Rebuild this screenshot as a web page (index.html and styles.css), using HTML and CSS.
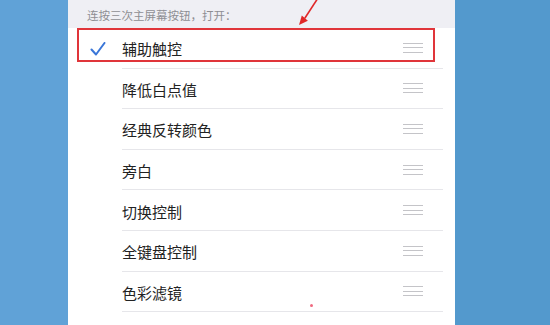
FILE: index.html
```html
<!DOCTYPE html>
<html lang="zh-CN">
<head>
<meta charset="utf-8">
<title>辅助功能快捷键</title>
<link rel="stylesheet" href="styles.css">
</head>
<body>
<div class="screen">
  <div class="side side-left"></div>
  <div class="panel">
    <div class="header">连按三次主屏幕按钮，打开：</div>
    <ul class="list">
      <li class="row">
        <span class="check">
          <svg width="16" height="14" viewBox="0 0 16 14"><path d="M1.5 7.5 L6 12.5 L14.5 1" fill="none" stroke="#3a76d8" stroke-width="2" stroke-linecap="round" stroke-linejoin="round"/></svg>
        </span>
        <div class="body"><span class="label">辅助触控</span><span class="grip"><i></i><i></i><i></i></span></div>
      </li>
      <li class="row"><span class="check"></span><div class="body"><span class="label">降低白点值</span><span class="grip"><i></i><i></i><i></i></span></div></li>
      <li class="row"><span class="check"></span><div class="body"><span class="label">经典反转颜色</span><span class="grip"><i></i><i></i><i></i></span></div></li>
      <li class="row"><span class="check"></span><div class="body"><span class="label">旁白</span><span class="grip"><i></i><i></i><i></i></span></div></li>
      <li class="row"><span class="check"></span><div class="body"><span class="label">切换控制</span><span class="grip"><i></i><i></i><i></i></span></div></li>
      <li class="row"><span class="check"></span><div class="body"><span class="label">全键盘控制</span><span class="grip"><i></i><i></i><i></i></span></div></li>
      <li class="row"><span class="check"></span><div class="body"><span class="label">色彩滤镜</span><span class="grip"><i></i><i></i><i></i></span></div></li>
    </ul>
    <div class="highlight"></div>
    <svg class="arrow" width="40" height="30" viewBox="0 0 40 30">
      <line x1="28" y1="-2" x2="14.8" y2="18.2" stroke="#e02828" stroke-width="1.6"/>
      <polygon points="9,25 17.9,20.8 11.8,15.6" fill="#e02828"/>
    </svg>
    <span class="dot"></span>
  </div>
  <div class="side side-right"></div>
</div>
</body>
</html>
```
FILE: styles.css
```css
* { box-sizing: border-box; }
html, body { margin: 0; padding: 0; }
body {
  width: 550px;
  height: 325px;
  overflow: hidden;
  font-family: "Noto Sans CJK SC", "Noto Sans", sans-serif;
}
.screen {
  display: flex;
  height: 325px;
}
.side { flex: none; }
.side-left { width: 68px; background: #60a2d7; }
.side-right { flex: 1; background: #5399cd; }
.panel {
  position: relative;
  width: 387px;
  background: #ffffff;
  overflow: hidden;
}
.header {
  height: 28px;
  background: #efeff4;
  color: #8e8e93;
  font-size: 11.5px;
  line-height: 28px;
  padding-left: 19px;
  padding-top: 1px;
}
.list {
  list-style: none;
  margin: 0;
  padding: 0;
}
.row {
  display: flex;
  height: 40.6px;
}
.check {
  flex: none;
  width: 54px;
  padding-left: 22px;
  display: flex;
  align-items: center;
  padding-top: 1px;
}
.check svg { display: block; }
.body {
  flex: 1;
  margin-right: 12px;
  border-bottom: 1px solid #e6e6ea;
  display: flex;
  align-items: center;
  justify-content: space-between;
  padding-right: 20px;
}
.label {
  font-size: 15px;
  color: #222222;
  padding-top: 2px;
}
.grip {
  display: flex;
  flex-direction: column;
  gap: 3.5px;
  width: 20px;
}
.grip i {
  display: block;
  height: 1px;
  background: #c4c4c8;
}
.highlight {
  position: absolute;
  left: 9px;
  top: 28px;
  width: 358px;
  height: 34px;
  border: 2px solid #e0353a;
}
.arrow {
  position: absolute;
  left: 222px;
  top: 0;
  overflow: visible;
}
.dot {
  position: absolute;
  left: 242px;
  top: 304px;
  width: 3px;
  height: 3px;
  border-radius: 50%;
  background: #f06a80;
}
```
